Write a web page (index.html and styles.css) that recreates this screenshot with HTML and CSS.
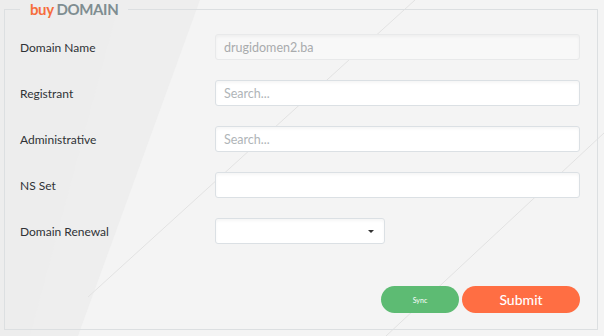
FILE: index.html
```html
<!DOCTYPE html>
<html lang="en">
<head>
<meta charset="utf-8">
<title>buy DOMAIN</title>
<link rel="stylesheet" href="styles.css">
</head>
<body>
<svg class="backdrop" width="604" height="336" viewBox="0 0 604 336" aria-hidden="true">
  <polygon points="0,0 200,0 78,336 0,336" fill="#eeeeee"/>
  <polygon points="0,0 120,0 30,336 0,336" fill="#ededed" opacity="0.6"/>
  <line x1="415" y1="0" x2="88" y2="297" stroke="#e2e2e2" stroke-width="1"/>
  <line x1="604" y1="133" x2="386" y2="336" stroke="#e2e2e2" stroke-width="1"/>
</svg>
<form class="domain-form">
  <fieldset class="panel">
    <legend class="panel-title"><span class="buy">buy</span> <span class="domain">DOMAIN</span></legend>
    <div class="rows">
      <label class="label" for="dn">Domain Name</label>
      <input class="field field-disabled" id="dn" type="text" value="drugidomen2.ba" disabled>

      <label class="label" for="reg">Registrant</label>
      <input class="field" id="reg" type="text" placeholder="Search...">

      <label class="label" for="adm">Administrative</label>
      <input class="field" id="adm" type="text" placeholder="Search...">

      <label class="label" for="ns">NS Set</label>
      <input class="field" id="ns" type="text">

      <label class="label" for="ren">Domain Renewal</label>
      <div class="select" id="ren"><span class="caret"></span></div>
    </div>
    <div class="actions">
      <button type="button" class="btn btn-sync">Sync</button>
      <button type="submit" class="btn btn-submit">Submit</button>
    </div>
  </fieldset>
</form>
</body>
</html>
```

FILE: styles.css
```css
* { box-sizing: border-box; }
html, body { margin: 0; padding: 0; }
body {
  width: 604px;
  height: 336px;
  overflow: hidden;
  background: #f4f4f4;
  font-family: Lato, "Open Sans", sans-serif;
  position: relative;
}
.backdrop {
  position: absolute;
  left: 0;
  top: 0;
  z-index: 0;
}
.domain-form {
  position: relative;
  z-index: 1;
  padding: 0 6px 6px 4px;
}
.panel {
  margin: 0;
  border: 1px solid #dcdfe1;
  padding: 16px 17px 15px 15px;
  height: 330px;
  min-width: 0;
}
.panel-title {
  margin-left: 0;
  padding: 0 10px;
  font-size: 15px;
  letter-spacing: -0.4px;
  font-weight: 700;
  line-height: 18px;
}
.buy { color: #f66d3c; }
.domain { color: #7f8d91; }
.rows {
  display: grid;
  grid-template-columns: 195px 1fr;
  row-gap: 20px;
  align-items: center;
}
.label {
  font-size: 12px;
  color: #2f3236;
}
.field {
  height: 26px;
  width: 100%;
  border: 1px solid #dbe0e4;
  border-radius: 3px;
  background: #fff;
  box-shadow: inset 0 2px 3px rgba(0,0,0,0.04);
  padding: 0 8px;
  font-family: Lato, "Open Sans", sans-serif;
  font-size: 12.5px;
  color: #555;
  outline: none;
}
.field::placeholder { color: #b0b5b8; }
.field-disabled {
  background: #f8f8f8;
  border-color: #e8e9ea;
  color: #a9abad;
}
.select {
  width: 170px;
  height: 26px;
  border: 1px solid #dbe0e4;
  border-radius: 3px;
  background: #fff;
  box-shadow: inset 0 2px 3px rgba(0,0,0,0.04);
  display: flex;
  align-items: center;
  justify-content: flex-end;
  padding-right: 10px;
}
.caret {
  width: 0;
  height: 0;
  border-left: 3.5px solid transparent;
  border-right: 3.5px solid transparent;
  border-top: 3.5px solid #333;
}
.actions {
  display: flex;
  justify-content: flex-end;
  align-items: center;
  gap: 3px;
  margin-top: 42px;
}
.btn {
  border: none;
  border-radius: 14px;
  height: 27px;
  color: #fff;
  font-family: Lato, "Open Sans", sans-serif;
  cursor: pointer;
  padding: 0;
}
.btn-sync {
  width: 78px;
  background: #5dbb73;
  font-size: 7px;
}
.btn-submit {
  width: 118px;
  background: #ff6e43;
  font-size: 14px;
  font-weight: 500;
}
```
